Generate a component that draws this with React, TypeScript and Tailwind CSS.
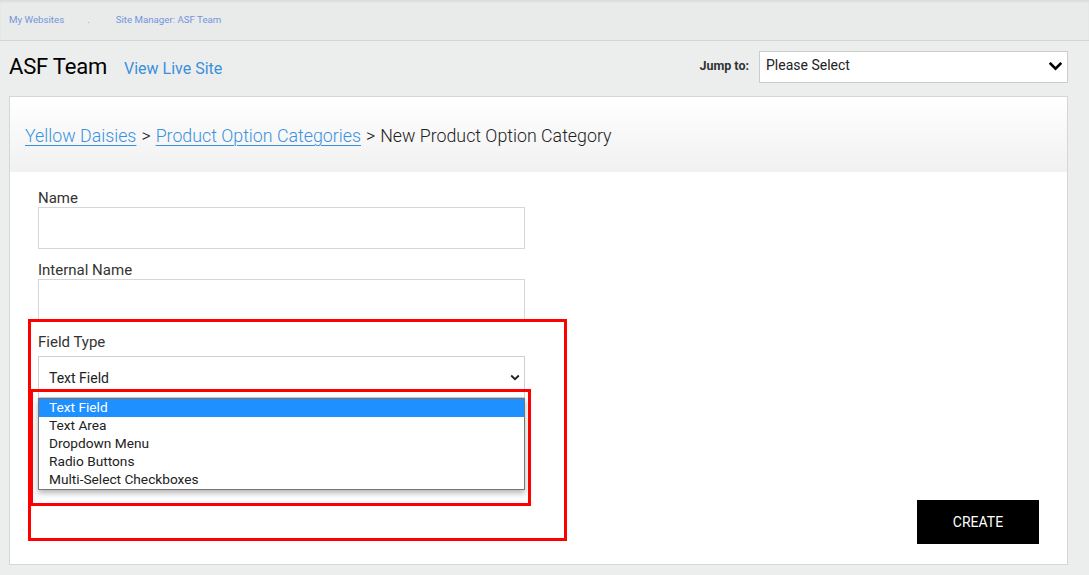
import React from "react";

const Chevron = ({ className }: { className?: string }) => (
  <svg viewBox="0 0 12 8" className={className}>
    <path d="M1.5 1.5 L6 6 L10.5 1.5" fill="none" stroke="currentColor" strokeWidth="2.4" strokeLinecap="square" />
  </svg>
);

const SmallChevron = ({ className }: { className?: string }) => (
  <svg viewBox="0 0 10 7" className={className}>
    <path d="M1.2 1.5 L5 5.2 L8.8 1.5" fill="none" stroke="currentColor" strokeWidth="1.8" />
  </svg>
);

export default function App() {
  const options = ["Text Field", "Text Area", "Dropdown Menu", "Radio Buttons", "Multi-Select Checkboxes"];
  return (
    <div
      className="w-[1089px] h-[575px] overflow-hidden bg-[#eceeed] text-[#222]"
      style={{ fontFamily: "Roboto, 'Noto Sans', sans-serif" }}
    >
      {/* top bar */}
      <div className="h-[41px] bg-[#e9eaea] border-b border-[#d3d4d4] shadow-[inset_0_2px_2px_rgba(0,0,0,0.06)] flex items-center pl-[9px] text-[9.7px] text-[#7395dc]">
        <span>My Websites</span>
        <span className="ml-[23px] text-[#999]">.</span>
        <span className="ml-[26px]">Site Manager: ASF Team</span>
      </div>

      {/* header row */}
      <div className="h-[55px] flex items-center justify-between pl-[9px] pr-[21px] pb-[4px]">
        <div className="flex items-baseline">
          <span className="text-[22px] text-black tracking-[-0.2px]">ASF Team</span>
          <span className="ml-[17px] text-[16px] text-[#3b8fdb]">View Live Site</span>
        </div>
        <div className="flex items-center">
          <span className="text-[12.5px] font-bold text-[#333] mr-[10px]">Jump to:</span>
          <div className="w-[309px] h-[32px] bg-white border border-[#cccccc] flex items-center justify-between pl-[6px] pr-[5px]">
            <span className="text-[14px] text-[#222] -mt-[2px]">Please Select</span>
            <Chevron className="w-[13px] h-[9px] text-black" />
          </div>
        </div>
      </div>

      {/* card */}
      <div className="ml-[9px] mr-[21px] h-[469px] bg-white border border-[#d5d6d6] relative">
        <div className="h-[75px] bg-gradient-to-b from-white to-[#f1f1f1] flex items-center pl-[15px] pt-[3px] text-[17.8px] font-light text-[#222]">
          <span className="text-[#3a92de] underline underline-offset-[3px] decoration-1">Yellow Daisies</span>
          <span className="mx-[5px]">&gt;</span>
          <span className="text-[#3a92de] underline underline-offset-[3px] decoration-1">Product Option Categories</span>
          <span className="mx-[5px]">&gt;</span>
          <span>New Product Option Category</span>
        </div>

        <div className="pl-[28px] pt-[15px] w-[515px] text-[15px] text-[#333]">
          <div className="h-[20px] leading-[22px]">Name</div>
          <div className="h-[42px] border border-[#d7d7d7] bg-white" />
          <div className="h-[20px] leading-[22px] mt-[10px]">Internal Name</div>
          <div className="h-[42px] border border-[#d7d7d7] bg-white" />
          <div className="h-[20px] leading-[22px] mt-[10px]">Field Type</div>
          <div className="relative mt-[5px]">
            <div className="h-[42px] border border-[#cfcfcf] bg-white flex items-center justify-between pl-[10px] pr-[4px]">
              <span className="text-[14px] text-[#222] mt-[2px]">Text Field</span>
              <SmallChevron className="w-[10px] h-[7px] text-[#222]" />
            </div>
            <div className="absolute left-0 top-[42px] w-[487px] bg-white border border-[#767676] shadow-[0_3px_6px_rgba(0,0,0,0.3)] z-10">
              {options.map((o, i) => (
                <div
                  key={o}
                  className={
                    i === 0
                      ? "h-[18px] leading-[17px] pl-[10px] bg-[#1e90ff] text-white text-[13.7px]"
                      : "h-[18px] leading-[17px] pl-[10px] text-[#222] text-[13.7px]"
                  }
                >
                  {o}
                </div>
              ))}
            </div>
          </div>
        </div>

        {/* red annotation boxes */}
        <div className="absolute left-[18px] top-[222px] w-[539px] h-[222px] border-[3px] border-[#ff0000] pointer-events-none" />
        <div className="absolute left-[20px] top-[292px] w-[501px] h-[117px] border-[3px] border-[#ff0000] pointer-events-none z-20" />

        <div className="absolute left-[907px] top-[403px] w-[122px] h-[44px] bg-black flex items-center justify-center text-white text-[14px]">
          CREATE
        </div>
      </div>
    </div>
  );
}
